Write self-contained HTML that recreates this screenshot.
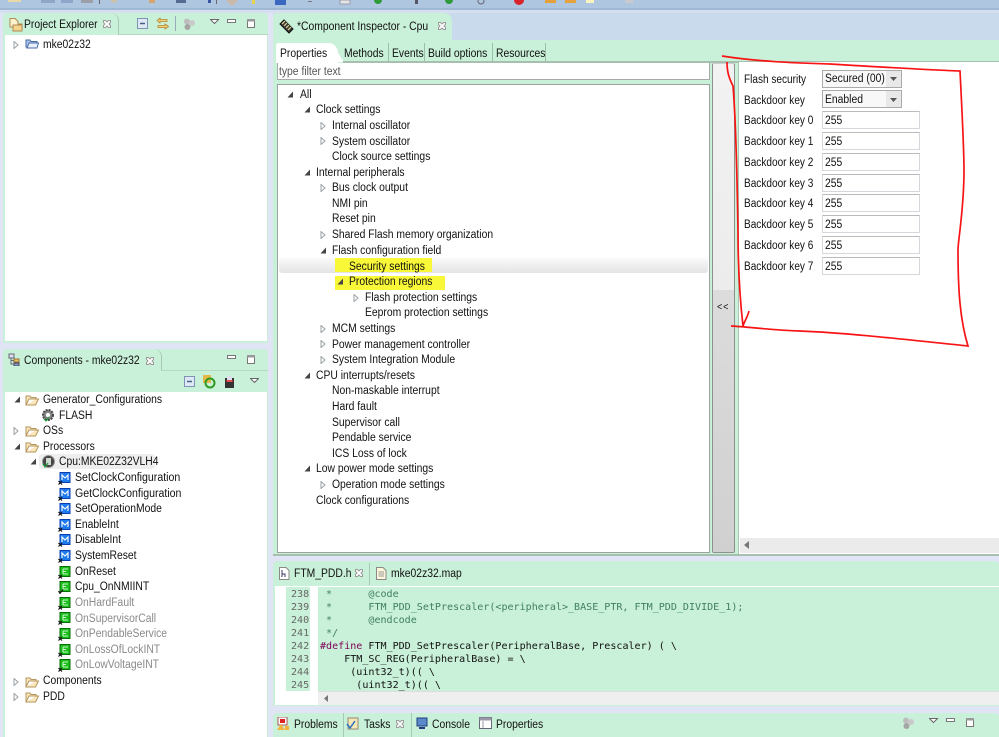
<!DOCTYPE html>
<html><head><meta charset="utf-8"><style>
html,body{margin:0;padding:0;background:#e0e4f4}
#r{position:relative;width:999px;height:737px;overflow:hidden;background:#e0e4f4;font-family:"Liberation Sans",sans-serif;font-size:11.5px;color:#111}
#r div,#r span,#r svg{position:absolute}
.t{white-space:nowrap;line-height:16px;height:16px;margin-top:1px;transform:scaleX(.9);transform-origin:0 50%}
.l{transform:scaleX(.875)}
.g{color:#8a8a8a}
.c{font-family:"DejaVu Sans Mono",monospace;font-size:10.05px;white-space:pre;line-height:13px;height:13px;color:#111;left:320px;margin-top:1px}
.cm{color:#3f7f5f}
.n{font-family:"DejaVu Sans Mono",monospace;font-size:10.05px;line-height:13px;height:13px;color:#666;left:291px;margin-top:1px}
.in{background:#fff;border:1px solid #d4d8dc;border-top-color:#bbb;box-sizing:border-box;left:822px;width:98px;height:18px}
.sel{background:#f8f8f8;border:1px solid #aaa;box-sizing:border-box;left:822px;width:80px;height:18px}
</style></head><body><div id="r">
<svg width="0" height="0" style="left:0;top:0"><defs>
<g id="cl"><path d="M1 0.5L5 4L1 7.5Z" fill="#fff" stroke="#9aa0a4"/></g>
<g id="op"><path d="M6 0.5V6.5H0.5Z" fill="#444"/></g>
<g id="fo"><path d="M1 12V3H5L6 4.500H11V6H4L1 12H10.500L13.500 6H11" fill="#fbe7bd" stroke="#b5955c"/></g>
<g id="m"><rect x="2" y="0.5" width="10" height="10" fill="#1e7cf0" stroke="#0b3fb0"/><path d="M4 8V3L7 6L10 3V8" fill="none" stroke="#fff" stroke-width="1.100"/><path d="M0.500 9L4 12.500M4 9L0.500 12.500" stroke="#111" stroke-width="1.200"/></g>
<g id="e"><rect x="2" y="0.5" width="10" height="10" fill="#19c119" stroke="#0b6b0b"/><path d="M5 3H10M5 3V8M5 5.500H8M5 8H10" stroke="#fff" stroke-width=".8" fill="none"/><path d="M0.500 9L4 12.500M4 9L0.500 12.500" stroke="#111" stroke-width="1.200"/></g>
<g id="ev"><rect x="2" y="0.5" width="10" height="10" fill="#19c119" stroke="#0b6b0b"/><path d="M5 3H10M5 3V8M5 5.500H8M5 8H10" stroke="#fff" stroke-width=".8" fill="none"/><path d="M0.500 10L2 12.500L5 8.500" stroke="#111" stroke-width="1.100" fill="none"/></g>
<g id="x"><path d="M1.500 1.500H3.500L5 3L6.500 1.500H8.500L8.500 3.500L7 5L8.500 6.500V8.500H6.500L5 7L3.500 8.500H1.500V6.500L3 5L1.500 3.500Z" fill="#fff" stroke="#9a9a9a"/></g>
<g id="tb"><path d="M0.500 0.500L4.500 4.500L8.500 0.500Z" fill="#fff" stroke="#666"/><rect x="17.500" y="0.500" width="8" height="3" fill="#fff" stroke="#777"/><rect x="37.500" y="0.500" width="7" height="8" fill="#fff" stroke="#777"/><rect x="37" y="0" width="8" height="2.500" fill="#999"/></g>
<g id="ball"><circle cx="4" cy="3.500" r="3" fill="#bdbdbd"/><circle cx="9" cy="5" r="3" fill="#c9c9c9"/><circle cx="4.500" cy="9" r="3" fill="#a5a5a5"/></g>
</defs></svg>

<!-- top toolbar -->
<div style="left:0;top:0;width:999px;height:9px;background:#aec6e0"></div>
<div style="left:0;top:8px;width:999px;height:2px;background:#a0b8d3"></div>
<div style="left:0;top:10px;width:999px;height:3px;background:#d5dff0"></div>
<svg width="640" height="8" style="left:0;top:0">
<rect x="8" y="0" width="13" height="2" fill="#ead9a8"/><rect x="41" y="0" width="14" height="3" fill="#8fa6c9"/><rect x="61" y="0" width="12" height="3" fill="#8fa6c9"/><rect x="81" y="0" width="12" height="3" fill="#9a9fa8"/><rect x="99" y="0" width="1" height="4" fill="#667"/><circle cx="114" cy="0" r="3" fill="#cdbfa8"/><rect x="149" y="0" width="6" height="3" fill="#d9a36c"/><rect x="176" y="0" width="10" height="3" fill="#556b8f"/><rect x="208" y="0" width="3" height="3" fill="#3555a5"/><rect x="216" y="0" width="1" height="4" fill="#667"/><circle cx="232" cy="0" r="5" fill="#c9b9a8"/><rect x="252" y="0" width="3" height="4" fill="#e8d24a"/><rect x="275" y="0" width="11" height="5" fill="#3a68c0"/><rect x="308" y="1" width="4" height="1" fill="#778"/><rect x="340" y="0" width="10" height="4" fill="#e6e6e6" stroke="#99a"/><circle cx="378" cy="0" r="4" fill="#2f9a3a"/><rect x="415" y="0" width="3" height="4" fill="#556"/><circle cx="449" cy="0" r="4" fill="#2f9a3a"/><circle cx="481" cy="1" r="3" fill="none" stroke="#667"/><circle cx="519" cy="0" r="5" fill="#d8232a"/><rect x="545" y="0" width="11" height="3" fill="#e5a23c"/><rect x="565" y="0" width="11" height="3" fill="#e5a23c"/><rect x="586" y="0" width="8" height="3" fill="#fbf3c0"/><rect x="625" y="0" width="8" height="3" fill="#c9c9d0"/>
</svg>

<!-- Project Explorer -->
<div style="left:3px;top:13px;width:265px;height:330px;background:#c9f0d8;border-radius:4px 4px 0 0"></div>
<div style="left:3px;top:13px;width:115px;height:22px;background:#c9f0d8;border-radius:3px 8px 0 0;border-right:1px solid #a8c8b4"></div>
<div style="left:5px;top:35px;width:262px;height:306px;background:#fff"></div>
<div style="left:118px;top:34px;width:150px;height:1px;background:#b5d8c2"></div>
<svg width="18" height="15" style="left:8px;top:17px"><path d="M2 1.500H7L10 4.500V7H14V14H5V10H2Z" fill="#fff3cf" stroke="#b08a50"/><rect x="5" y="8" width="9" height="6" fill="#f3d48f" stroke="#b08a50"/></svg>
<span class="t" style="left:24px;top:16px">Project Explorer</span>
<svg width="10" height="10" style="left:102px;top:19px"><use href="#x"/></svg>
<svg width="12" height="12" style="left:137px;top:18px"><rect x=".5" y=".5" width="10" height="10" fill="#dfe8f5" stroke="#7f93b5"/><path d="M3 5.500H8" stroke="#4a5f85" stroke-width="1.500"/></svg>
<svg width="14" height="14" style="left:156px;top:17px"><path d="M4 1L1 3.500L4 6V4.500H11V2.500H4ZM9 7L12.500 9.500L9 12V10.500H2V8.500H9Z" fill="#f2d27a" stroke="#b5822c" stroke-width=".8"/></svg>
<div style="left:175px;top:16px;width:1px;height:15px;background:#9ab"></div>
<svg width="13" height="13" style="left:183px;top:18px"><use href="#ball"/></svg>
<svg width="46" height="10" style="left:210px;top:19px"><use href="#tb"/></svg>
<svg width="8" height="8" style="left:13px;top:41px"><use href="#cl"/></svg>
<svg width="15" height="13" style="left:25px;top:37px"><path d="M1 10V3H5L6 4.500H12V10Z" fill="#a9c4ea" stroke="#4a6aa5"/><path d="M2 11L4 6H13.500L12 11Z" fill="#e8f0fb" stroke="#4a6aa5"/></svg>
<span class="t" style="left:43px;top:36px">mke02z32</span>

<!-- Inspector -->
<div style="left:273px;top:13px;width:726px;height:27px;background:#c8daec"></div>
<div style="left:273px;top:13px;width:179px;height:28px;background:#c9f0d8;border-radius:4px 8px 0 0"></div>
<div style="left:273px;top:40px;width:726px;height:22px;background:#c9f0d8"></div>
<div style="left:273px;top:61px;width:726px;height:495px;background:#c9f0d8"></div>
<svg width="17" height="17" style="left:278px;top:18px"><path d="M2 6L6 2L15 11L11 15Z" fill="#3a3a3a" stroke="#111"/><path d="M4 6L7 3M6 8L9 5M8 10L11 7M10 12L13 9" stroke="#e7d98e" stroke-width="1.200"/></svg>
<span class="t" style="left:297px;top:18px">*Component Inspector - Cpu</span>
<svg width="10" height="10" style="left:437px;top:21px"><use href="#x"/></svg>

<div style="left:276px;top:43px;width:62px;height:20px;background:#fff;border-radius:3px 10px 0 0"></div>
<svg width="14" height="20" style="left:330px;top:43px"><path d="M0 0Q5 2 8 10L14 19H0Z" fill="#fff"/></svg>
<span class="t" style="left:280px;top:45px">Properties</span>
<span class="t" style="left:344px;top:45px">Methods</span><div style="left:388px;top:43px;width:1px;height:18px;background:#9dbca9"></div>
<span class="t" style="left:392px;top:45px">Events</span><div style="left:424px;top:43px;width:1px;height:18px;background:#9dbca9"></div>
<span class="t" style="left:428px;top:45px">Build options</span><div style="left:492px;top:43px;width:1px;height:18px;background:#9dbca9"></div>
<span class="t" style="left:496px;top:45px">Resources</span><div style="left:545px;top:43px;width:1px;height:18px;background:#9dbca9"></div>
<div style="left:343px;top:61px;width:656px;height:2px;background:#a6bfae"></div>

<div style="left:277px;top:63px;width:433px;height:17px;background:#fff;border:1px solid #a8aca8;border-top:0;box-sizing:border-box"></div>
<span class="t" style="left:279px;top:63px;color:#555">type filter text</span>
<div style="left:277px;top:84px;width:433px;height:469px;background:#fff;border:1px solid #9ea29e;box-sizing:border-box"></div>

<div style="left:279px;top:258px;width:429px;height:15px;background:linear-gradient(#fafafa,#e4e4e4);border-radius:3px"></div>
<div style="left:335px;top:258px;width:97px;height:14px;background:#f8f838"></div>
<div style="left:335px;top:276px;width:110px;height:14px;background:#f8f838"></div>

<svg width="8" height="8" style="left:287px;top:91px"><use href="#op"/></svg><span class="t" style="left:300px;top:86px">All</span>
<svg width="8" height="8" style="left:304px;top:106px"><use href="#op"/></svg><span class="t" style="left:316px;top:101px">Clock settings</span>
<svg width="8" height="8" style="left:320px;top:122px"><use href="#cl"/></svg><span class="t" style="left:332px;top:117px">Internal oscillator</span>
<svg width="8" height="8" style="left:320px;top:137px"><use href="#cl"/></svg><span class="t" style="left:332px;top:133px">System oscillator</span>
<span class="t" style="left:332px;top:148px">Clock source settings</span>
<svg width="8" height="8" style="left:304px;top:169px"><use href="#op"/></svg><span class="t" style="left:316px;top:164px">Internal peripherals</span>
<svg width="8" height="8" style="left:320px;top:184px"><use href="#cl"/></svg><span class="t" style="left:332px;top:179px">Bus clock output</span>
<span class="t" style="left:332px;top:195px">NMI pin</span>
<span class="t" style="left:332px;top:210px">Reset pin</span>
<svg width="8" height="8" style="left:320px;top:231px"><use href="#cl"/></svg><span class="t" style="left:332px;top:226px">Shared Flash memory organization</span>
<svg width="8" height="8" style="left:320px;top:247px"><use href="#op"/></svg><span class="t" style="left:332px;top:242px">Flash configuration field</span>
<span class="t" style="left:349px;top:258px">Security settings</span>
<svg width="8" height="8" style="left:337px;top:278px"><use href="#op"/></svg><span class="t" style="left:349px;top:273px">Protection regions</span>
<svg width="8" height="8" style="left:353px;top:294px"><use href="#cl"/></svg><span class="t" style="left:365px;top:289px">Flash protection settings</span>
<span class="t" style="left:365px;top:304px">Eeprom protection settings</span>
<svg width="8" height="8" style="left:320px;top:325px"><use href="#cl"/></svg><span class="t" style="left:332px;top:320px">MCM settings</span>
<svg width="8" height="8" style="left:320px;top:340px"><use href="#cl"/></svg><span class="t" style="left:332px;top:336px">Power management controller</span>
<svg width="8" height="8" style="left:320px;top:356px"><use href="#cl"/></svg><span class="t" style="left:332px;top:351px">System Integration Module</span>
<svg width="8" height="8" style="left:304px;top:372px"><use href="#op"/></svg><span class="t" style="left:316px;top:367px">CPU interrupts/resets</span>
<span class="t" style="left:332px;top:382px">Non-maskable interrupt</span>
<span class="t" style="left:332px;top:398px">Hard fault</span>
<span class="t" style="left:332px;top:414px">Supervisor call</span>
<span class="t" style="left:332px;top:429px">Pendable service</span>
<span class="t" style="left:332px;top:445px">ICS Loss of lock</span>
<svg width="8" height="8" style="left:304px;top:465px"><use href="#op"/></svg><span class="t" style="left:316px;top:460px">Low power mode settings</span>
<svg width="8" height="8" style="left:320px;top:481px"><use href="#cl"/></svg><span class="t" style="left:332px;top:476px">Operation mode settings</span>
<span class="t" style="left:316px;top:492px">Clock configurations</span>

<!-- sash -->
<div style="left:712px;top:63px;width:23px;height:490px;box-sizing:border-box;border:1px solid #8f8f8f;border-top-color:#ccc;background:linear-gradient(#f2f2f2 0,#ececec 226px,#dcdcdc 226px,#d0d0d0 100%);border-radius:2px"></div>
<span class="t" style="left:717px;top:299px;font-size:10px;letter-spacing:1px">&lt;&lt;</span>

<!-- details -->
<div style="left:738px;top:62px;width:261px;height:492px;background:#fff;border-left:1px solid #a8c8b4"></div>
<div style="left:740px;top:538px;width:259px;height:15px;background:#ebebeb"></div>
<svg width="6" height="8" style="left:744px;top:541px"><path d="M5 0V8L0 4Z" fill="#777"/></svg>
<span class="t l" style="left:744px;top:71px">Flash security</span>
<div class="sel" style="top:70px"></div><span class="t" style="left:825px;top:70px">Secured (00)</span>
<div style="left:886px;top:71px;width:15px;height:16px;background:#e8e8e8"></div>
<svg width="7" height="4" style="left:890px;top:77px"><path d="M0 0H7L3.500 4Z" fill="#555"/></svg>
<span class="t l" style="left:744px;top:92px">Backdoor key</span>
<div class="sel" style="top:90px"></div><span class="t" style="left:825px;top:91px">Enabled</span>
<div style="left:886px;top:91px;width:15px;height:16px;background:#e8e8e8"></div>
<svg width="7" height="4" style="left:890px;top:98px"><path d="M0 0H7L3.500 4Z" fill="#555"/></svg>

<span class="t l" style="left:744px;top:112px">Backdoor key 0</span><div class="in" style="top:111px"></div><span class="t" style="left:825px;top:112px">255</span>
<span class="t l" style="left:744px;top:133px">Backdoor key 1</span><div class="in" style="top:132px"></div><span class="t" style="left:825px;top:133px">255</span>
<span class="t l" style="left:744px;top:154px">Backdoor key 2</span><div class="in" style="top:153px"></div><span class="t" style="left:825px;top:154px">255</span>
<span class="t l" style="left:744px;top:175px">Backdoor key 3</span><div class="in" style="top:174px"></div><span class="t" style="left:825px;top:175px">255</span>
<span class="t l" style="left:744px;top:195px">Backdoor key 4</span><div class="in" style="top:194px"></div><span class="t" style="left:825px;top:195px">255</span>
<span class="t l" style="left:744px;top:216px">Backdoor key 5</span><div class="in" style="top:215px"></div><span class="t" style="left:825px;top:216px">255</span>
<span class="t l" style="left:744px;top:237px">Backdoor key 6</span><div class="in" style="top:236px"></div><span class="t" style="left:825px;top:237px">255</span>
<span class="t l" style="left:744px;top:258px">Backdoor key 7</span><div class="in" style="top:257px"></div><span class="t" style="left:825px;top:258px">255</span>
<div style="left:273px;top:554px;width:726px;height:2px;background:#a6bfae"></div>

<!-- Components -->
<div style="left:3px;top:349px;width:265px;height:388px;background:#c9f0d8;border-radius:4px 4px 0 0"></div>
<div style="left:3px;top:349px;width:158px;height:21px;background:#c9f0d8;border-radius:3px 8px 0 0;border-right:1px solid #a8c8b4"></div>
<div style="left:5px;top:392px;width:262px;height:345px;background:#fff"></div>
<div style="left:161px;top:370px;width:107px;height:1px;background:#b5d8c2"></div>
<svg width="16" height="13" style="left:8px;top:353px"><rect x="1" y="1" width="5" height="4" fill="#dde" stroke="#667"/><rect x="6" y="6" width="5" height="3" fill="#e8c469" stroke="#97702a"/><rect x="6" y="10" width="5" height="3" fill="#89b" stroke="#446"/><path d="M3 5V11H6M3 7.500H6" stroke="#667" fill="none"/></svg>
<span class="t" style="left:24px;top:352px">Components - mke02z32</span>
<svg width="10" height="10" style="left:145px;top:356px"><use href="#x"/></svg>
<svg width="46" height="10" style="left:210px;top:355px"><rect x="17.500" y=".5" width="8" height="3" fill="#fff" stroke="#777"/><rect x="37.500" y=".5" width="7" height="8" fill="#fff" stroke="#777"/><rect x="37" y="0" width="8" height="2.500" fill="#999"/></svg>
<svg width="12" height="12" style="left:184px;top:376px"><rect x=".5" y=".5" width="10" height="10" fill="#dfe8f5" stroke="#7f93b5"/><path d="M3 5.500H8" stroke="#4a5f85" stroke-width="1.500"/></svg>
<svg width="14" height="14" style="left:202px;top:375px"><rect x="1" y="0" width="8" height="8" fill="#e6b84a"/><circle cx="8" cy="8" r="4.500" fill="none" stroke="#2f9a22" stroke-width="2"/></svg>
<svg width="13" height="13" style="left:223px;top:376px"><rect x="2" y="2" width="9" height="10" fill="#333"/><rect x="4" y="0" width="5" height="6" fill="#dde"/><path d="M3 5H10" stroke="#d22" stroke-width="1.500"/></svg>
<svg width="9" height="5" style="left:250px;top:378px"><path d="M.5 .5L4.500 4.500L8.500 .5Z" fill="#fff" stroke="#666"/></svg>

<svg width="8" height="8" style="left:14px;top:396px"><use href="#op"/></svg><svg width="15" height="13" style="left:25px;top:393px"><use href="#fo"/></svg><span class="t" style="left:43px;top:391px">Generator_Configurations</span>
<svg width="15" height="15" style="left:41px;top:408px"><circle cx="7" cy="7" r="5" fill="#888" stroke="#444" stroke-width="2" stroke-dasharray="2 1"/><circle cx="7" cy="7" r="2" fill="#fff"/><path d="M3 11L5 13L8 9" stroke="#1a9a3a" fill="none" stroke-width="1.200"/></svg><span class="t" style="left:59px;top:407px">FLASH</span>
<svg width="8" height="8" style="left:13px;top:427px"><use href="#cl"/></svg><svg width="15" height="13" style="left:25px;top:424px"><use href="#fo"/></svg><span class="t" style="left:43px;top:422px">OSs</span>
<svg width="8" height="8" style="left:14px;top:443px"><use href="#op"/></svg><svg width="15" height="13" style="left:25px;top:440px"><use href="#fo"/></svg><span class="t" style="left:43px;top:438px">Processors</span>
<div style="left:39px;top:454px;width:116px;height:15px;background:#eee;border-radius:3px"></div>
<svg width="8" height="8" style="left:30px;top:458px"><use href="#op"/></svg><svg width="15" height="15" style="left:41px;top:454px"><circle cx="7.500" cy="7.500" r="6" fill="#444" stroke="#999"/><rect x="5" y="4" width="5" height="7" fill="#cfd8cf"/><path d="M2 10L4 13L7 9" stroke="#1a9a3a" fill="none" stroke-width="1.200"/></svg><span class="t" style="left:59px;top:453px">Cpu:MKE02Z32VLH4</span>

<svg width="13" height="13" style="left:58px;top:472px"><use href="#m"/></svg><span class="t" style="left:75px;top:469px;transform:scaleX(.92)">SetClockConfiguration</span>
<svg width="13" height="13" style="left:58px;top:488px"><use href="#m"/></svg><span class="t" style="left:75px;top:485px;transform:scaleX(.92)">GetClockConfiguration</span>
<svg width="13" height="13" style="left:58px;top:503px"><use href="#m"/></svg><span class="t" style="left:75px;top:500px">SetOperationMode</span>
<svg width="13" height="13" style="left:58px;top:519px"><use href="#m"/></svg><span class="t" style="left:75px;top:516px">EnableInt</span>
<svg width="13" height="13" style="left:58px;top:534px"><use href="#m"/></svg><span class="t" style="left:75px;top:531px">DisableInt</span>
<svg width="13" height="13" style="left:58px;top:550px"><use href="#m"/></svg><span class="t" style="left:75px;top:547px">SystemReset</span>
<svg width="13" height="13" style="left:58px;top:566px"><use href="#e"/></svg><span class="t" style="left:75px;top:563px">OnReset</span>
<svg width="13" height="13" style="left:58px;top:581px"><use href="#ev"/></svg><span class="t" style="left:75px;top:578px">Cpu_OnNMIINT</span>
<svg width="13" height="13" style="left:58px;top:597px"><use href="#e"/></svg><span class="t g" style="left:75px;top:594px">OnHardFault</span>
<svg width="13" height="13" style="left:58px;top:612px"><use href="#e"/></svg><span class="t g" style="left:75px;top:610px">OnSupervisorCall</span>
<svg width="13" height="13" style="left:58px;top:628px"><use href="#e"/></svg><span class="t g" style="left:75px;top:625px">OnPendableService</span>
<svg width="13" height="13" style="left:58px;top:644px"><use href="#e"/></svg><span class="t g" style="left:75px;top:641px">OnLossOfLockINT</span>
<svg width="13" height="13" style="left:58px;top:659px"><use href="#e"/></svg><span class="t g" style="left:75px;top:656px">OnLowVoltageINT</span>
<svg width="8" height="8" style="left:13px;top:678px"><use href="#cl"/></svg><svg width="15" height="13" style="left:25px;top:675px"><use href="#fo"/></svg><span class="t" style="left:43px;top:672px">Components</span>
<svg width="8" height="8" style="left:13px;top:693px"><use href="#cl"/></svg><svg width="15" height="13" style="left:25px;top:690px"><use href="#fo"/></svg><span class="t" style="left:43px;top:688px">PDD</span>

<!-- Editor -->
<div style="left:273px;top:561px;width:726px;height:145px;background:#c9f0d8;border-radius:4px 4px 0 0"></div>
<svg width="11" height="13" style="left:279px;top:567px"><path d="M.5 .5H7L10 3.500V12.500H.5Z" fill="#fff" stroke="#8a8a8a"/><path d="M3 3V10M3 7H6V10" stroke="#3a3a6a" fill="none"/></svg>
<span class="t" style="left:294px;top:565px">FTM_PDD.h</span>
<svg width="10" height="10" style="left:354px;top:568px"><use href="#x"/></svg>
<div style="left:369px;top:563px;width:1px;height:22px;background:#a8c8b4"></div>
<svg width="11" height="13" style="left:376px;top:567px"><path d="M.5 .5H7L10 3.500V12.500H.5Z" fill="#fdf6dc" stroke="#8a8a8a"/><path d="M2.500 5H8M2.500 7H8M2.500 9H8" stroke="#999"/></svg>
<span class="t" style="left:391px;top:565px">mke02z32.map</span>
<div style="left:275px;top:586px;width:724px;height:119px;background:#fff"></div>
<div style="left:286px;top:587px;width:24px;height:104px;background:#c9f0d8"></div>
<div style="left:318px;top:587px;width:681px;height:104px;background:#c9f0d8"></div>
<div style="left:318px;top:691px;width:681px;height:14px;background:#efefef;border-top:1px solid #ddd;box-sizing:border-box"></div>
<svg width="5" height="7" style="left:324px;top:695px"><path d="M4 0V7L0 3.500Z" fill="#777"/></svg>
<span class="n" style="top:587px">238</span><span class="c cm" style="top:587px"> *      @code</span>
<span class="n" style="top:600px">239</span><span class="c cm" style="top:600px"> *      FTM_PDD_SetPrescaler(&lt;peripheral&gt;_BASE_PTR, FTM_PDD_DIVIDE_1);</span>
<span class="n" style="top:613px">240</span><span class="c cm" style="top:613px"> *      @endcode</span>
<span class="n" style="top:626px">241</span><span class="c cm" style="top:626px"> */</span>
<span class="n" style="top:639px">242</span><span class="c" style="top:639px"><b style="color:#7f0055;font-weight:normal">#define</b> FTM_PDD_SetPrescaler(PeripheralBase, Prescaler) ( \</span>
<span class="n" style="top:652px">243</span><span class="c" style="top:652px">    FTM_SC_REG(PeripheralBase) = \</span>
<span class="n" style="top:665px">244</span><span class="c" style="top:665px">     (uint32_t)(( \</span>
<span class="n" style="top:678px">245</span><span class="c" style="top:678px">      (uint32_t)(( \</span>

<!-- Bottom -->
<div style="left:273px;top:713px;width:726px;height:24px;background:#c9f0d8;border-radius:4px 4px 0 0"></div>
<div style="left:343px;top:713px;width:1px;height:24px;background:#a8c8b4"></div>
<div style="left:411px;top:713px;width:1px;height:24px;background:#a8c8b4"></div>
<svg width="13" height="14" style="left:277px;top:717px"><rect x="1" y="0" width="9" height="8" fill="#fff" stroke="#a55"/><rect x="3" y="2" width="5" height="4" fill="#d22"/><path d="M0 13L4 7L8 13Z" fill="#f2b33d"/><rect x="8" y="9" width="4" height="4" fill="#f2b33d"/></svg>
<span class="t" style="left:294px;top:716px">Problems</span>
<svg width="14" height="14" style="left:346px;top:716px"><rect x="2" y="2" width="10" height="11" fill="#f5e7b5" stroke="#987"/><path d="M1 8L4 12L9 5" stroke="#2a6fc0" stroke-width="1.500" fill="none"/></svg>
<span class="t" style="left:364px;top:716px">Tasks</span>
<svg width="10" height="10" style="left:395px;top:719px"><use href="#x"/></svg>
<svg width="13" height="13" style="left:416px;top:717px"><rect x="1" y="1" width="10" height="8" fill="#5a8ac8" stroke="#1f3f80"/><path d="M3 11H9" stroke="#1f3f80" stroke-width="2"/></svg>
<span class="t" style="left:432px;top:716px">Console</span>
<svg width="13" height="13" style="left:479px;top:717px"><rect x=".5" y=".5" width="12" height="11" fill="#fff" stroke="#667"/><rect x=".5" y=".5" width="12" height="3" fill="#99a"/><path d="M4 4V11" stroke="#99a"/></svg>
<span class="t" style="left:496px;top:716px">Properties</span>
<svg width="13" height="13" style="left:902px;top:717px"><use href="#ball"/></svg>
<svg width="46" height="10" style="left:929px;top:718px"><use href="#tb"/></svg>

<!-- Red annotation -->
<svg width="999" height="737" style="left:0;top:0" fill="none" stroke="#f81414" stroke-width="1.700"><path d="M722 56C760 62 800 63 830 64C880 67 930 70 960 71C962 110 964 150 964 170C964 210 958 240 958 250C958 290 960 320 968 346C910 340 850 333 800 331C770 330 750 327 731 326"/><path d="M727 62C727 72 729 78 733 86C735 110 737 170 738 230C738 270 740 300 743 326C745 320 748 316 749 311"/></svg>
</div></body></html>
